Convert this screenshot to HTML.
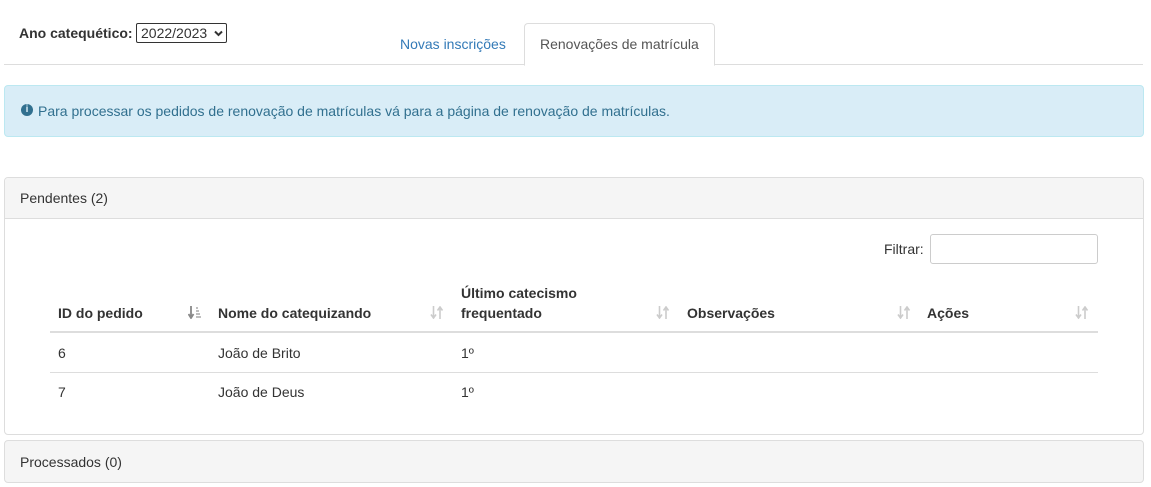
<!DOCTYPE html><html><head><meta charset="utf-8"><style>
body{margin:0;width:1151px;height:487px;background:#fff;font-family:"Liberation Sans",sans-serif;font-size:14px;color:#333;position:relative;overflow:hidden}
.a{position:absolute}
.th{position:absolute;font-weight:bold;top:305px}
.si{position:absolute;top:306px}
</style></head><body>
<div class="a" style="left:19px;top:25px;font-weight:bold">Ano catequético:</div>
<div class="a" style="left:136px;top:23px;border:1px solid #333;border-radius:2px;font-size:14px;line-height:18px;padding-left:4px;box-sizing:border-box;width:91px;height:20px">2022/2023<svg class="a" style="left:77px;top:6px" width="9" height="7" viewBox="0 0 9 7"><path d="M1 1.5L4.5 5L8 1.5" stroke="#333" stroke-width="2" fill="none"/></svg></div>
<div class="a" style="left:4px;top:64px;width:1139px;border-top:1px solid #ddd"></div>
<div class="a" style="left:400px;top:36px;color:#337ab7">Novas inscrições</div>
<div class="a" style="left:524px;top:23px;width:189px;height:41px;border:1px solid #ddd;border-bottom:1px solid #fff;border-radius:4px 4px 0 0;background:#fff"></div>
<div class="a" style="left:540px;top:36px;color:#555">Renovações de matrícula</div>
<div class="a" style="left:4px;top:85px;width:1138px;height:50px;background:#d9edf7;border:1px solid #bce8f1;border-radius:4px"></div>
<div class="a" style="left:21px;top:104px;width:12px;height:12px;border-radius:50%;background:#31708f;color:#d9edf7;font-size:10px;font-weight:bold;text-align:center;line-height:12px">i</div>
<div class="a" style="left:38px;top:103px;color:#31708f">Para processar os pedidos de renovação de matrículas vá para a página de renovação de matrículas.</div>
<div class="a" style="left:4px;top:177px;width:1138px;height:256px;border:1px solid #ddd;border-radius:4px"></div>
<div class="a" style="left:5px;top:178px;width:1138px;height:40px;background:#f5f5f5;border-bottom:1px solid #ddd;border-radius:4px 4px 0 0"></div>
<div class="a" style="left:20px;top:190px">Pendentes (2)</div>
<div class="a" style="left:884px;top:241px">Filtrar:</div>
<div class="a" style="left:930px;top:234px;width:166px;height:28px;border:1px solid #ccc;border-radius:3px"></div>
<div class="a" style="left:461px;top:285px;font-weight:bold">Último catecismo</div>
<div class="th" style="left:58px">ID do pedido</div>
<div class="th" style="left:218px">Nome do catequizando</div>
<div class="th" style="left:461px">frequentado</div>
<div class="th" style="left:687px">Observações</div>
<div class="th" style="left:927px">Ações</div>
<svg class="si" style="left:188px" width="14" height="13" viewBox="0 0 14 13"><path d="M3 0V10M0.5 8L3 12L5.5 8" stroke="#888" stroke-width="1.8" fill="none"/><path d="M8 2h2M8 5h3M8 8h4M8 11h5" stroke="#999" stroke-width="1.3"/></svg>
<svg class="si" style="left:430px" width="14" height="13" viewBox="0 0 14 13"><path d="M3.5 0V11M1 8.5L3.5 12L6 8.5M10 13V2M7.5 4.5L10 1L12.5 4.5" stroke="#ccc" stroke-width="1.6" fill="none"/></svg>
<svg class="si" style="left:656px" width="14" height="13" viewBox="0 0 14 13"><path d="M3.5 0V11M1 8.5L3.5 12L6 8.5M10 13V2M7.5 4.5L10 1L12.5 4.5" stroke="#ccc" stroke-width="1.6" fill="none"/></svg>
<svg class="si" style="left:897px" width="14" height="13" viewBox="0 0 14 13"><path d="M3.5 0V11M1 8.5L3.5 12L6 8.5M10 13V2M7.5 4.5L10 1L12.5 4.5" stroke="#ccc" stroke-width="1.6" fill="none"/></svg>
<svg class="si" style="left:1075px" width="14" height="13" viewBox="0 0 14 13"><path d="M3.5 0V11M1 8.5L3.5 12L6 8.5M10 13V2M7.5 4.5L10 1L12.5 4.5" stroke="#ccc" stroke-width="1.6" fill="none"/></svg>
<div class="a" style="left:50px;top:331px;width:1048px;border-top:2px solid #ddd"></div>
<div class="a" style="left:58px;top:345px">6</div><div class="a" style="left:218px;top:345px">João de Brito</div><div class="a" style="left:461px;top:345px">1º</div>
<div class="a" style="left:50px;top:372px;width:1048px;border-top:1px solid #ddd"></div>
<div class="a" style="left:58px;top:384px">7</div><div class="a" style="left:218px;top:384px">João de Deus</div><div class="a" style="left:461px;top:384px">1º</div>
<div class="a" style="left:4px;top:440px;width:1138px;height:41px;border:1px solid #ddd;border-radius:4px;background:#f5f5f5"></div>
<div class="a" style="left:20px;top:454px">Processados (0)</div>
</body></html>
